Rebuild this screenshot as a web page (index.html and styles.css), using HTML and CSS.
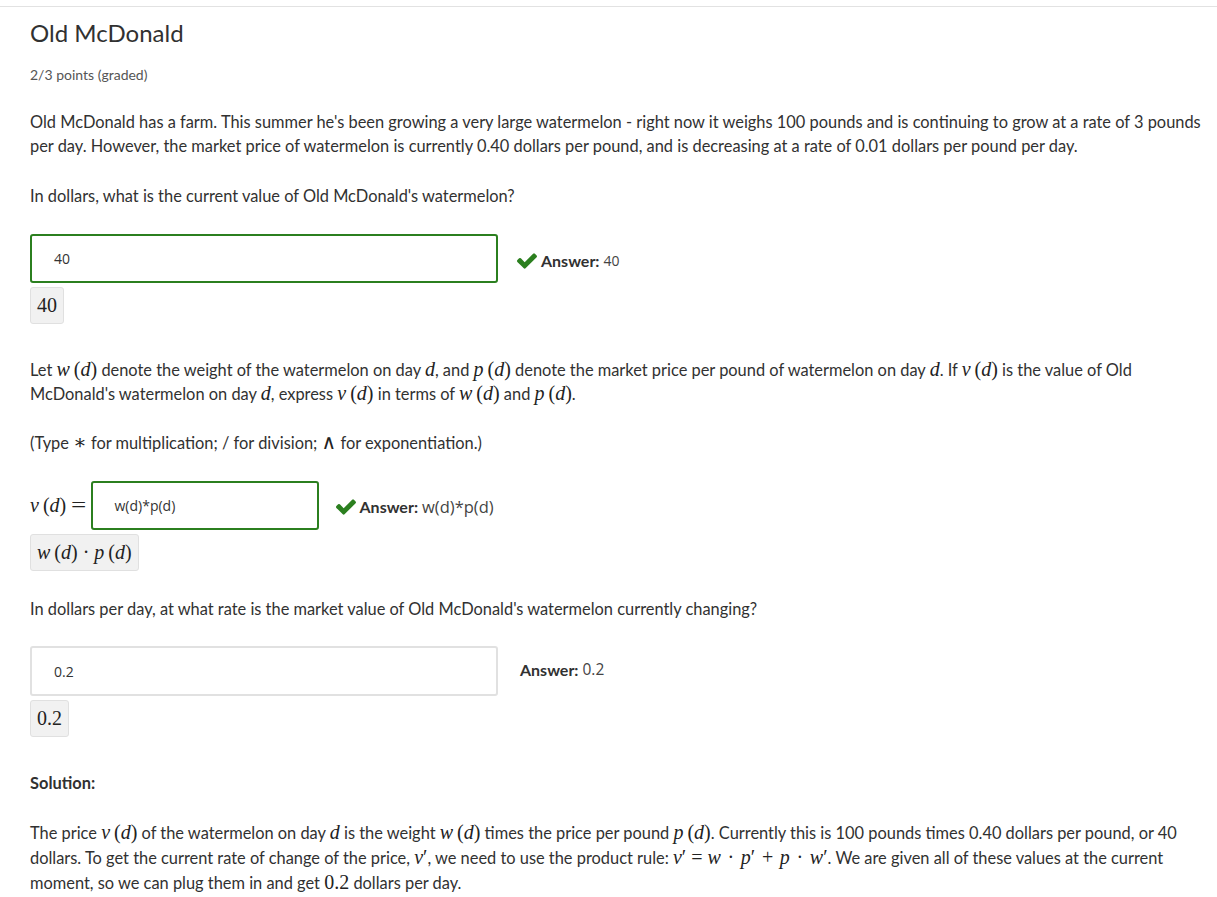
FILE: index.html
```html
<!DOCTYPE html>
<html>
<head>
<meta charset="utf-8">
<link rel="stylesheet" href="styles.css">
</head>
<body>
<div class="page">
  <h2 class="title">Old McDonald</h2>
  <div class="points">2/3 points (graded)</div>

  <p class="first">Old McDonald has a farm. This summer he's been growing a very large watermelon - right now it weighs 100 pounds and is continuing to grow at a rate of 3 pounds per day. However, the market price of watermelon is currently 0.40 dollars per pound, and is decreasing at a rate of 0.01 dollars per pound per day.</p>
  <p class="q1">In dollars, what is the current value of Old McDonald's watermelon?</p>

  <div class="block">
    <div class="row">
      <div class="input correct wide">40</div>
      <div class="answer"><svg class="check" viewBox="121 334 1550 1188"><path d="M1671 566q0 40-28 68l-724 724-136 136q-28 28-68 28t-68-28l-136-136-362-362q-28-28-28-68t28-68l136-136q28-28 68-28t68 28l294 295 656-657q28-28 68-28t68 28l136 136q28 28 28 68z"/></svg><b>Answer:</b> <span class="val">40</span></div>
    </div>
    <div class="preview"><span class="mn">40</span></div>
  </div>

  <p class="after-block">Let <span class="m"><i>w</i>&#8201;(<i>d</i>)</span> denote the weight of the watermelon on day <span class="m"><i>d</i></span>, and <span class="m"><i>p</i>&#8201;(<i>d</i>)</span> denote the market price per pound of watermelon on day <span class="m"><i>d</i></span>. If <span class="m"><i>v</i>&#8201;(<i>d</i>)</span> is the value of Old McDonald's watermelon on day <span class="m"><i>d</i></span>, express <span class="m"><i>v</i>&#8201;(<i>d</i>)</span> in terms of <span class="m"><i>w</i>&#8201;(<i>d</i>)</span> and <span class="m"><i>p</i>&#8201;(<i>d</i>)</span>.</p>
  <p>(Type <span class="m">∗</span> for multiplication; / for division; <span class="m">∧</span> for exponentiation.)</p>

  <div class="block">
    <div class="row">
      <span class="m lhs"><i>v</i>&#8201;(<i>d</i>)<span class="eq">=</span></span>
      <div class="input correct narrow">w(d)*p(d)</div>
      <div class="answer a2"><svg class="check" viewBox="121 334 1550 1188"><path d="M1671 566q0 40-28 68l-724 724-136 136q-28 28-68 28t-68-28l-136-136-362-362q-28-28-28-68t28-68l136-136q28-28 68-28t68 28l294 295 656-657q28-28 68-28t68 28l136 136q28 28 28 68z"/></svg><b>Answer:</b> <span class="val big">w(d)*p(d)</span></div>
    </div>
    <div class="preview"><span class="mn"><i>w</i>&#8201;(<i>d</i>)&#8197;·&#8197;<i>p</i>&#8201;(<i>d</i>)</span></div>
  </div>

  <p class="q3">In dollars per day, at what rate is the market value of Old McDonald's watermelon currently changing?</p>

  <div class="block b3">
    <div class="row">
      <div class="input plain wide">0.2</div>
      <div class="answer noicon"><b>Answer:</b> <span class="val mid">0.2</span></div>
    </div>
    <div class="preview"><span class="mn">0.2</span></div>
  </div>

  <p class="sol-h"><b>Solution:</b></p>
  <p class="sol">The price <span class="m"><i>v</i>&#8201;(<i>d</i>)</span> of the watermelon on day <span class="m"><i>d</i></span> is the weight <span class="m"><i>w</i>&#8201;(<i>d</i>)</span> times the price per pound <span class="m"><i>p</i>&#8201;(<i>d</i>)</span>. Currently this is 100 pounds times 0.40 dollars per pound, or 40 dollars. To get the current rate of change of the price, <span class="m"><i>v</i>′</span>, we need to use the product rule: <span class="m"><i>v</i>′&#8197;=&#8197;<i>w</i>&#8196;·&#8196;<i>p</i>′&#8196;+&#8196;<i>p</i>&#8196;·&#8196;<i>w</i>′</span>. We are given all of these values at the current moment, so we can plug them in and get <span class="m">0.2</span> dollars per day.</p>
</div>
</body>
</html>
```

FILE: styles.css
```css
html, body {
  margin: 0;
  padding: 0;
  background: #fff;
}
body {
  font-family: "Lato", "Open Sans", sans-serif;
  color: #313131;
  font-size: 16.4px;
}
.page {
  margin-top: 6px;
  border-top: 1px solid #e2e2e2;
  padding: 11px 0 0 30px;
}
.title {
  margin: 0;
  font-weight: 400;
  font-size: 24px;
  line-height: 30px;
  color: #313131;
}
.points {
  margin-top: 17px;
  font-size: 14px;
  line-height: 20px;
  color: #555;
}
p {
  margin: 25px 0 0 0;
  line-height: 24px;
}
.q1 {
  margin-top: 26px;
}
.block {
  margin-top: 26px;
  display: flex;
  flex-direction: column;
  align-items: flex-start;
}
.b3 {
  margin-top: 25px;
}
.row {
  display: flex;
  align-items: center;
}
.input {
  box-sizing: border-box;
  height: 49px;
  border-radius: 3px;
  font-family: "Open Sans", sans-serif;
  font-size: 14px;
  color: #333;
  padding-left: 22px;
  display: flex;
  align-items: center;
}
.input.correct {
  border: 2px solid #2b7f1f;
}
.input.plain {
  border: 2px solid #e1e1e1;
  height: 50px;
}
.wide { width: 468px; }
.narrow { width: 228px; margin-left: 3px; }
.answer {
  margin-left: 19px;
  display: flex;
  align-items: center;
  font-size: 16px;
  color: #313131;
  margin-top: 4px;
}
.answer.a2 {
  margin-left: 17px;
  margin-top: 2px;
}
.answer.noicon {
  margin-left: 22px;
  margin-top: -4px;
}
.answer b {
  font-weight: 700;
  margin-right: 4px;
}
.val {
  font-family: "Open Sans", sans-serif;
  font-size: 14px;
  color: #444;
}
.val.big {
  font-size: 16.5px;
}
.val.mid {
  font-size: 15.5px;
}
.check {
  width: 20px;
  height: 16px;
  fill: #2b7f1f;
  margin-right: 4px;
}
.preview {
  margin-top: 4px;
  background: #f1f1f1;
  border: 1px solid #e0e0e0;
  border-radius: 3px;
  padding: 6px 6px;
  line-height: 23px;
}
.mn, .m {
  font-family: "Liberation Serif", "DejaVu Serif", serif;
  font-size: 20px;
  color: #222;
}
.m i, .mn i {
  font-style: italic;
}
p .m {
  line-height: 0;
}
.eq {
  display: inline-block;
  margin-left: 7px;
  margin-right: 3px;
  transform: scaleX(1.35);
}
.after-block {
  margin-top: 34px;
}
.q3 {
  margin-top: 26px;
}
.sol-h {
  margin-top: 34px;
}
.sol {
  margin-top: 25px;
  line-height: 25px;
  padding-bottom: 20px;
}
```
